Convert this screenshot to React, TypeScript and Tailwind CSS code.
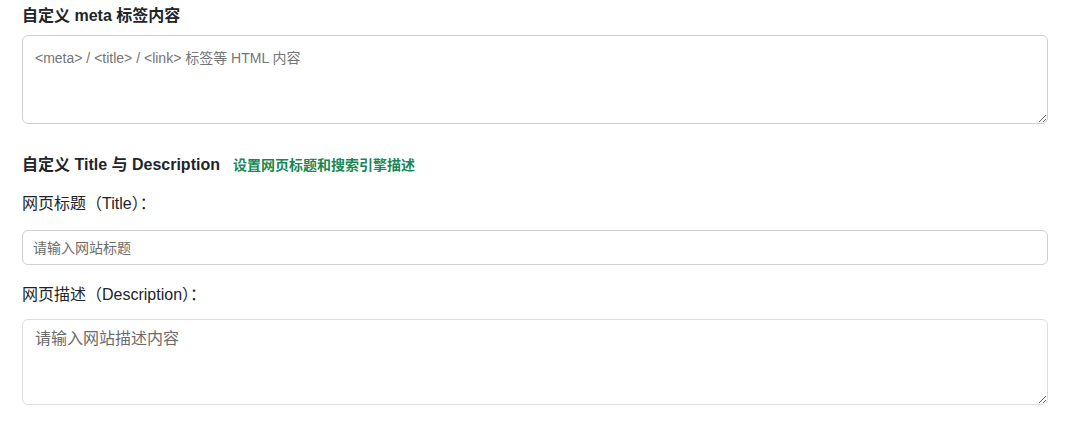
import React from "react";

export default function App() {
  const font = { fontFamily: '"Liberation Sans", "Noto Sans CJK SC", sans-serif' };
  return (
    <div className="w-[1091px] h-[425px] bg-white overflow-hidden" style={font}>
      <div className="pl-[22px] pr-[43px] pt-[5px] flex flex-col">
        <h3 className="text-[16px] leading-[22px] font-bold text-[#212529]">自定义 meta 标签内容</h3>
        <textarea
          className="mt-[8px] h-[89px] w-full resize-y rounded-[6px] border border-[#cfcfcf] px-[12px] pt-[11px] text-[14px] leading-[22px] text-[#333] placeholder:text-[#757575] outline-none"
          placeholder="<meta> / <title> / <link> 标签等 HTML 内容"
        />
        <div className="mt-[30px] flex items-baseline gap-[13px]">
          <h3 className="text-[16px] leading-[22px] font-bold text-[#212529]">自定义 Title 与 Description</h3>
          <span className="text-[14px] font-bold text-[#198754]">设置网页标题和搜索引擎描述</span>
        </div>
        <label className="mt-[17px] text-[16px] leading-[22px] text-[#212529]">网页标题（Title）：</label>
        <input
          className="mt-[15px] h-[35px] w-full rounded-[6px] border border-[#d0d0d0] px-[10px] text-[14px] text-[#333] placeholder:text-[#6b6b6b] outline-none"
          placeholder="请输入网站标题"
        />
        <label className="mt-[19px] text-[16px] leading-[22px] text-[#212529]">网页描述（Description）：</label>
        <textarea
          className="mt-[13px] h-[86px] w-full resize-y rounded-[6px] border border-[#dedede] px-[12px] pt-[7px] text-[16px] leading-[24px] text-[#333] placeholder:text-[#6b6b6b] outline-none"
          placeholder="请输入网站描述内容"
        />
      </div>
    </div>
  );
}
